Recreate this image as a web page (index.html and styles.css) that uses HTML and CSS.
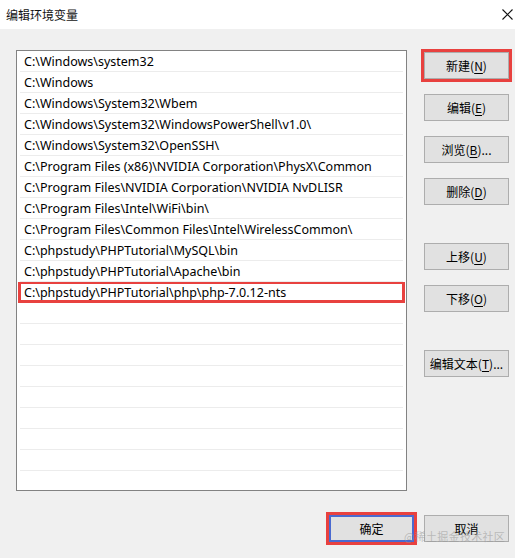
FILE: index.html
```html
<!DOCTYPE html>
<html>
<head>
    <meta charset="utf-8">
    <title>编辑环境变量</title>
    <link rel="stylesheet" href="styles.css">
</head>
<body>
    <div class="window">
        <div class="titlebar">
            <span class="title">编辑环境变量</span>
            <span class="close">
                <svg width="11" height="11" viewBox="0 0 11 11">
                    <path d="M0.5 0.5 L10.5 10.5 M10.5 0.5 L0.5 10.5" stroke="#111" stroke-width="1.1" fill="none"/>
                </svg>
            </span>
        </div>
        <div class="content">
            <div class="main">
                <ul class="path-list">
                    <li>C:\Windows\system32</li>
                    <li>C:\Windows</li>
                    <li>C:\Windows\System32\Wbem</li>
                    <li>C:\Windows\System32\WindowsPowerShell\v1.0\</li>
                    <li>C:\Windows\System32\OpenSSH\</li>
                    <li>C:\Program Files (x86)\NVIDIA Corporation\PhysX\Common</li>
                    <li>C:\Program Files\NVIDIA Corporation\NVIDIA NvDLISR</li>
                    <li>C:\Program Files\Intel\WiFi\bin\</li>
                    <li>C:\Program Files\Common Files\Intel\WirelessCommon\</li>
                    <li>C:\phpstudy\PHPTutorial\MySQL\bin</li>
                    <li>C:\phpstudy\PHPTutorial\Apache\bin</li>
                    <li class="marked">C:\phpstudy\PHPTutorial\php\php-7.0.12-nts</li>
                    <li></li>
                    <li></li>
                    <li></li>
                    <li></li>
                    <li></li>
                    <li></li>
                    <li></li>
                    <li></li>
                    <li></li>
                </ul>
                <div class="actions">
                    <button class="btn marked">新建(<u>N</u>)</button>
                    <button class="btn">编辑(<u>E</u>)</button>
                    <button class="btn">浏览(<u>B</u>)...</button>
                    <button class="btn">删除(<u>D</u>)</button>
                    <button class="btn group">上移(<u>U</u>)</button>
                    <button class="btn">下移(<u>O</u>)</button>
                    <button class="btn group">编辑文本(<u>T</u>)...</button>
                </div>
            </div>
            <div class="footer">
                <button class="btn default marked">确定</button>
                <button class="btn">取消</button>
            </div>
        </div>
        <span class="watermark">@稀土掘金技术社区</span>
    </div>
</body>
</html>
```

FILE: styles.css
```css
:root {
    --dialog-bg: #f0f0f0;
    --btn-bg: #e1e1e1;
    --btn-border: #adadad;
    --mark-red: #e8413f;
    --focus-blue: #4a6ad0;
}

body {
    margin: 0;
    background: var(--dialog-bg);
    font-family: "Noto Sans", "Noto Sans CJK SC", sans-serif;
    color: #000;
}

.window {
    position: relative;
    width: 515px;
    height: 558px;
    display: flex;
    flex-direction: column;
}

.titlebar {
    height: 29px;
    background: #fff;
    display: flex;
    align-items: center;
    justify-content: space-between;
    padding: 0 2px 0 6px;
}

.title {
    font-family: "Noto Sans CJK SC", sans-serif;
    font-size: 12px;
    color: #111;
    margin-top: -1px;
}

.close {
    width: 11px;
    height: 11px;
    display: flex;
    margin-top: -1px;
}

.content {
    padding: 21px 6px 0 16px;
}

.main {
    display: flex;
    gap: 17px;
}

/* list of path entries, framed like a listview */
.path-list {
    list-style: none;
    margin: 0;
    padding: 0 3px;
    width: 383px;
    height: 439px;
    background: #fff;
    border: 1px solid #828282;
    overflow: hidden;
}

.path-list li {
    height: 18px;
    line-height: 18px;
    padding: 2px 0 0 4px;
    border-bottom: 1px solid #ececec;
    font-size: 12.5px;
    white-space: nowrap;
}

.path-list li.marked {
    margin: 0 -2px;
    padding: 1px 0 0 3px;
    border: 3px solid var(--mark-red);
    border-top-width: 2px;
    height: 15px;
    line-height: 15px;
}

.actions {
    width: 85px;
    display: flex;
    flex-direction: column;
    gap: 15px;
    padding-top: 2px;
}

.actions .group {
    margin-top: 23px;
}

.btn {
    height: 27px;
    width: 85px;
    background: var(--btn-bg);
    border: 1px solid var(--btn-border);
    font-family: "Noto Sans CJK SC", sans-serif;
    font-size: 12px;
    color: #000;
    padding: 0;
    line-height: 1;
}

.btn u {
    text-underline-offset: 2px;
}

.btn.marked {
    outline: 3px solid var(--mark-red);
    outline-offset: -1px;
}

.actions .btn.marked {
    outline-offset: 0;
}

.btn.default {
    border: 2px solid var(--focus-blue);
    outline-offset: 0;
}

.footer {
    display: flex;
    justify-content: flex-end;
    gap: 10px;
    margin-top: 24px;
}

/* faint site stamp lying across the cancel button */
.watermark {
    position: absolute;
    left: 404px;
    top: 528px;
    font-family: "Noto Sans CJK SC", sans-serif;
    font-size: 11px;
    color: rgba(150, 150, 150, 0.55);
    letter-spacing: 0.3px;
}
```
